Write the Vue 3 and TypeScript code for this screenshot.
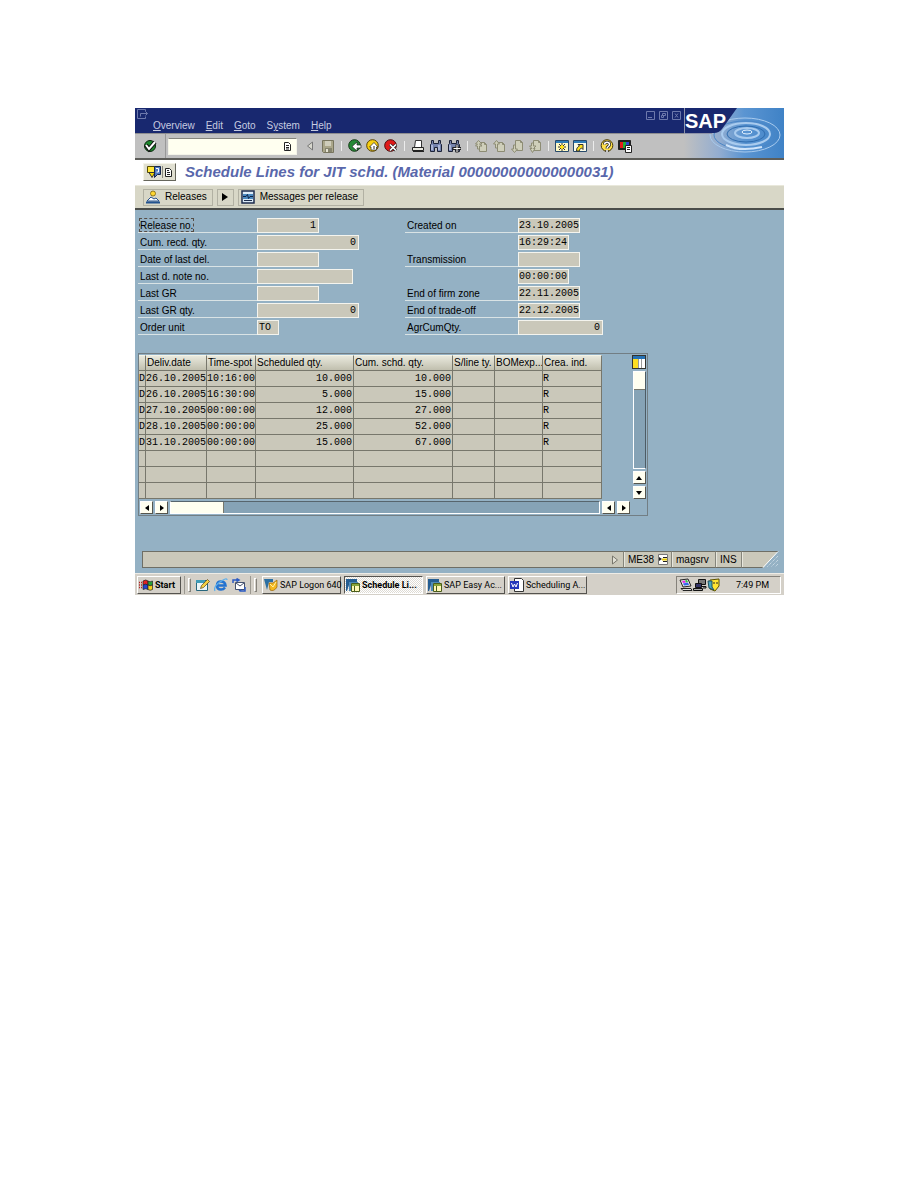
<script setup lang="ts">
import { ref } from 'vue'

interface Field {
  id: string
  label: string
  value: string
  size: string
  right?: boolean
}

const menus: [string, string, string][] = [
  ['', 'O', 'verview'],
  ['', 'E', 'dit'],
  ['', 'G', 'oto'],
  ['S', 'y', 'stem'],
  ['', 'H', 'elp'],
]

const leftFields: Field[] = [
  { id: 'release', label: 'Release no.', value: '1', size: 'w-date', right: true },
  { id: 'recd', label: 'Cum. recd. qty.', value: '0', size: 'w-qty', right: true },
  { id: 'lastdel', label: 'Date of last del.', value: '', size: 'w-date' },
  { id: 'note', label: 'Last d. note no.', value: '', size: 'w-note' },
  { id: 'gr', label: 'Last GR', value: '', size: 'w-date' },
  { id: 'grqty', label: 'Last GR qty.', value: '0', size: 'w-qty', right: true },
  { id: 'unit', label: 'Order unit', value: 'TO', size: 'w-unit' },
]

const rightFields: Field[] = [
  { id: 'created', label: 'Created on', value: '23.10.2005', size: 'w-date' },
  { id: 'createdtime', label: '', value: '16:29:24', size: 'w-time' },
  { id: 'trans', label: 'Transmission', value: '', size: 'w-date' },
  { id: 'transtime', label: '', value: '00:00:00', size: 'w-time' },
  { id: 'firm', label: 'End of firm zone', value: '22.11.2005', size: 'w-date' },
  { id: 'trade', label: 'End of trade-off', value: '22.12.2005', size: 'w-date' },
  { id: 'agr', label: 'AgrCumQty.', value: '0', size: 'w-agr', right: true },
]

const headers = ['', 'Deliv.date', 'Time-spot', 'Scheduled qty.', 'Cum. schd. qty.', 'S/line ty.', 'BOMexp...', 'Crea. ind.']
const rows: string[][] = [
  ['D', '26.10.2005', '10:16:00', '10.000', '10.000', '', '', 'R'],
  ['D', '26.10.2005', '16:30:00', '5.000', '15.000', '', '', 'R'],
  ['D', '27.10.2005', '00:00:00', '12.000', '27.000', '', '', 'R'],
  ['D', '28.10.2005', '00:00:00', '25.000', '52.000', '', '', 'R'],
  ['D', '31.10.2005', '00:00:00', '15.000', '67.000', '', '', 'R'],
  ['', '', '', '', '', '', '', ''],
  ['', '', '', '', '', '', '', ''],
  ['', '', '', '', '', '', '', ''],
]

const command = ref('')
const pageKinds = ['first', 'up', 'down', 'last']
const tasks = [
  { label: 'SAP Logon 640', icon: 'logon', active: false },
  { label: 'Schedule Li...', icon: 'gui', active: true },
  { label: 'SAP Easy Ac...', icon: 'gui', active: false },
  { label: 'Scheduling A...', icon: 'word', active: false },
]
</script>

<template>
  <main class="page">
    <div class="window">
      <header class="top">
        <div class="bars">
          <div class="menubar">
            <div class="captions">
              <svg class="sysicon" viewBox="0 0 13 11" width="13" height="11"><path d="M9.500 2.500V.5h-8v9h8v-2M4.500 7.500v-3h7M9.500 2.500l2 2-2 2" /></svg>
              <div class="winbtns">
                <button type="button" aria-label="Minimize"><svg viewBox="0 0 9 9" width="9" height="9"><path d="M.5.5h8v8h-8zM2 6.500h4" /></svg></button>
                <button type="button" aria-label="Restore"><svg viewBox="0 0 9 9" width="9" height="9"><path d="M.5.5h8v8h-8zM3.500 2.500h3v2h-3zM2.500 4.500h2v2h-2z" /></svg></button>
                <button type="button" aria-label="Close"><svg viewBox="0 0 9 9" width="9" height="9"><path d="M.5.5h8v8h-8zM3 2.500l3 4M6 2.500l-3 4" /></svg></button>
              </div>
            </div>
            <nav class="menus">
              <a v-for="m in menus" :key="m[2]" href="#">{{ m[0] }}<u>{{ m[1] }}</u>{{ m[2] }}</a>
            </nav>
          </div>
          <div class="toolbar">
            <button type="button" class="enter" aria-label="Enter">
              <svg viewBox="0 0 14 14" width="14" height="14"><circle cx="7" cy="7" r="5.500" fill="#1d8a2d" stroke="#0b260d" /><path d="M3 6l3 4 6-7" fill="none" stroke="#111" stroke-width="4" /><path d="M3 6l3 4 6-7" fill="none" stroke="#fff" stroke-width="2" /></svg>
            </button>
            <div class="command">
              <input v-model="command" type="text" aria-label="Command" />
              <button type="button" aria-label="Command list"><svg viewBox="0 0 8 9" width="8" height="9"><path d="M.5.5h4l2 2v6h-6z" fill="#fff" stroke="#222" /><path d="M2 3.500h3M2 5.500h3M2 7h3" stroke="#222" /></svg></button>
            </div>
            <button type="button" class="tb" aria-label="Collapse"><svg viewBox="0 0 14 14" width="14" height="14"><path d="M9.500 3v8l-5-4z" fill="#d8d8ce" stroke="#777" /></svg></button>
            <button type="button" class="tb" aria-label="Save"><svg viewBox="0 0 14 14" width="14" height="14"><path d="M1.500 1.500h11v12h-10l-1-1z" fill="#aaa68a" stroke="#77745e" /><path d="M4 2h6v5H4z" fill="#cfcdbb" /><path d="M4 9h7v4H4z" fill="#85836e" /><path d="M5 10h2v3H5z" fill="#e5e3d3" /></svg></button>
            <i class="sep"></i>
            <button type="button" class="tb" aria-label="Back"><svg viewBox="0 0 14 14" width="14" height="14"><circle cx="6.500" cy="6.500" r="5.800" fill="#268a36" stroke="#123915" /><path d="M13 6H9V3L4 7.500 9 12V9h4z" fill="#fff" stroke="#222" stroke-width=".7" /></svg></button>
            <button type="button" class="tb" aria-label="Exit"><svg viewBox="0 0 14 14" width="14" height="14"><circle cx="6.500" cy="6.500" r="5.800" fill="#f8cf12" stroke="#5a4200" /><path d="M5 11V8H3.500L8 3.500 12 8h-1.500v3z" fill="#fff" stroke="#222" stroke-width=".7" /><path d="M8 7v3" stroke="#222" /></svg></button>
            <button type="button" class="tb" aria-label="Cancel"><svg viewBox="0 0 14 14" width="14" height="14"><circle cx="6.500" cy="6.500" r="5.800" fill="#e01919" stroke="#4d0808" /><path d="M6 5.500l6 6M12 5.500l-6 6" stroke="#222" stroke-width="3" /><path d="M6 5.500l6 6M12 5.500l-6 6" stroke="#fff" stroke-width="1.700" /></svg></button>
            <i class="sep"></i>
            <button type="button" class="tb" aria-label="Print"><svg viewBox="0 0 14 14" width="14" height="14"><path d="M4.500 1.500h6v7h-7z" fill="#fff" stroke="#333" /><path d="M1.500 8.500h11v3h-11z" fill="#e8e8e0" stroke="#222" /><path d="M2 12.500h11" stroke="#222" /></svg></button>
            <button type="button" class="tb" aria-label="Find"><svg viewBox="0 0 14 14" width="14" height="14"><path d="M2.500 1.500h2v3h5v-3h2v3l1 1v7h-4v-4h-3v4h-4v-7l1-1z" fill="#7583ad" stroke="#1c2238" /><path d="M3 6v5M10 6v5" stroke="#e0e6ff" /></svg></button>
            <button type="button" class="tb" aria-label="Find next"><svg viewBox="0 0 14 14" width="14" height="14"><path d="M2.500 1.500h2v3h5v-3h2v3l1 1v7h-4v-4h-3v4h-4v-7l1-1z" fill="#7583ad" stroke="#1c2238" /><path d="M3 6v5" stroke="#e0e6ff" /><path d="M10 5.500v8M6 9.500h8" stroke="#222" stroke-width="3" /><path d="M10 6v7M6.500 9.500h7" stroke="#fff" /></svg></button>
            <i class="sep"></i>
            <button v-for="k in pageKinds" :key="k" type="button" class="tb" :aria-label="`Page ${k}`">
              <svg viewBox="0 0 14 14" width="14" height="14" fill="#cfcfba" stroke="#8d8c74">
                <path v-if="k === 'first' || k === 'up'" d="M5.500 3.500h5l2 2v7h-7zM10.500 3.500v2h2" />
                <path v-else d="M5.500 1.500h5l2 2v8h-7zM10.500 1.500v2h2" />
                <path v-if="k === 'first'" d="M3.500 10V7h-2l2-2h-2L4.500 1.500 8 5H5.500L8 7H5.500v3z" />
                <path v-if="k === 'up'" d="M3.500 9V5h-2l3-3.500 3 3.500h-2v4z" />
                <path v-if="k === 'down'" d="M3.500 6v4h-2l3 3.500 3-3.500h-2V6z" />
                <path v-if="k === 'last'" d="M3.500 4v3h-2L4 9.500H2l2.500 4L7 9.500H5.500L8 7H5.500V4z" />
              </svg>
            </button>
            <i class="sep"></i>
            <button type="button" class="tb" aria-label="New session"><svg viewBox="0 0 14 14" width="14" height="14"><path d="M.5 1.500h13v11H.5z" fill="#fff9c4" stroke="#27496b" /><path d="M1 2h12v2H1z" fill="#2f7cb8" /><path d="M7 4v8M3 8h8M4 5l6 6M10 5l-6 6" stroke="#333" /><path d="M5 8h4M7 6v4" stroke="#ffe21a" stroke-width="2" /></svg></button>
            <button type="button" class="tb" aria-label="Create shortcut"><svg viewBox="0 0 14 14" width="14" height="14"><path d="M.5 1.500h13v11H.5z" fill="#fbfbe6" stroke="#27496b" /><path d="M1 2h12v2H1z" fill="#2f7cb8" /><path d="M3.500 12c0-3 1-4 3-5L5 5.500h5v5L8.500 9c-2 1-2 2-2 3z" fill="#ffe21a" stroke="#333" /></svg></button>
            <i class="sep"></i>
            <button type="button" class="tb" aria-label="Help"><svg viewBox="0 0 14 14" width="14" height="14"><circle cx="7" cy="6.500" r="5.800" fill="#ffe04a" stroke="#4a3a00" /><path d="M4.500 5.500c0-3 5-3 5 0 0 2-2.500 2-2.500 4M7 11v2" fill="none" stroke="#222" stroke-width="3" /><path d="M4.500 5.500c0-3 5-3 5 0 0 2-2.500 2-2.500 4M7 11v2" fill="none" stroke="#fff" stroke-width="1.500" /></svg></button>
            <button type="button" class="tb" aria-label="Customize layout"><svg viewBox="0 0 14 14" width="14" height="14"><path d="M.5 1.500h12v9H.5z" fill="#222" stroke="#222" /><path d="M2 3h3v6H2z" fill="#e31c1c" /><path d="M5 3h3v6H5z" fill="#1fb135" /><path d="M8 3h3v6H8z" fill="#2c46d8" /><path d="M7.500 6.500h6v7h-6z" fill="#fff" stroke="#222" /><path d="M9 8.500h3M9 10.500h3" stroke="#222" /></svg></button>
          </div>
        </div>
        <div class="brand">
          <svg class="water" viewBox="0 0 100 50" width="100" height="50">
            <defs>
              <linearGradient id="sea" x1="0" x2="1" y1="0" y2="0"><stop offset="0" stop-color="#c0c0c0" /><stop offset=".35" stop-color="#93add0" /><stop offset=".6" stop-color="#5b95d2" /><stop offset="1" stop-color="#3f82c6" /></linearGradient>
            </defs>
            <path d="M0 0h100v50H0z" fill="url(#sea)" />
            <g fill="none" stroke="#a9cbee">
              <ellipse cx="63" cy="24" rx="5" ry="2" stroke="#e6f3ff" />
              <ellipse cx="63" cy="25" rx="12" ry="5" stroke-width="2" />
              <ellipse cx="62" cy="26" rx="19" ry="8" stroke="#2f6cae" />
              <ellipse cx="62" cy="26" rx="24" ry="11" stroke-width="2" />
              <ellipse cx="61" cy="27" rx="31" ry="14" stroke="#4b86c6" />
              <ellipse cx="61" cy="27" rx="35" ry="17" />
              <path d="M42 37q14 7 36 2" stroke="#cfe4fa" stroke-width="2" />
            </g>
            <path d="M0 0h53L38 21q-3 4-8 4H0z" fill="#18286f" />
            <path d="M.5 0v25.500H28" fill="none" stroke="#8d93a8" />
          </svg>
          <span class="sap">SAP</span>
        </div>
      </header>

      <section class="titlebar">
        <button type="button" class="objbtn" aria-label="Services for object">
          <svg viewBox="0 0 26 14" width="26" height="14"><path d="M.5 1.500h7v6h-7z" fill="#ffe63b" stroke="#554b00" /><path d="M2 7.500h6l-3 5z" fill="#f5d800" stroke="#333" /><path d="M7.500 1.500h6v8h-3l-3 3z" fill="#4e78c0" stroke="#16264d" /><path d="M9 3.500h2.500V7H9.500" fill="none" stroke="#fff" /><path d="M15.500 1v12" stroke="#8a8a7e" /><path d="M18.500 3.500h4l2 2v6h-6z" fill="#fff" stroke="#222" /><path d="M20 5.500h2M20 7.500h3M20 9.500h3" stroke="#222" /></svg>
        </button>
        <h1>Schedule Lines for JIT schd. (Material 000000000000000031)</h1>
      </section>

      <section class="appbar">
        <button type="button" class="app">
          <svg viewBox="0 0 14 14" width="14" height="14"><circle cx="7" cy="3.500" r="2.500" fill="#ffd733" stroke="#6c5300" stroke-width=".7" /><path d="M1 11l4-4 3 2 2-1 3 3z" fill="#fff" stroke="#27528f" /><path d="M0 12.500h14" stroke="#22528f" stroke-width="2" /></svg>
          <span>Releases</span>
        </button>
        <button type="button" class="app arrow" aria-label="Next"><svg viewBox="0 0 6 8" width="6" height="8"><path d="M0 0v8l6-4z" fill="#000" /></svg></button>
        <button type="button" class="app">
          <svg viewBox="0 0 14 14" width="14" height="14"><path d="M1 1h12v12H1z" fill="#dcebf7" stroke="#1d2d4d" stroke-width="1.500" /><path d="M2 4h10v5H2z" fill="#4a88bf" /><path d="M2 6.500h3l1.500-2 1 4 1.500-2h3" fill="none" stroke="#0d2447" /><path d="M3 10.500h8" stroke="#1d2d4d" /></svg>
          <span>Messages per release</span>
        </button>
      </section>

      <section class="content">
        <form class="fields" @submit.prevent>
          <div class="col">
            <div v-for="(f, i) in leftFields" :key="f.id" class="field">
              <label :for="f.id"><span :class="{ focus: i === 0 }">{{ f.label }}</span></label>
              <input :id="f.id" type="text" readonly :value="f.value" :class="[f.size, { right: f.right }]" />
            </div>
          </div>
          <div class="col second">
            <div v-for="f in rightFields" :key="f.id" class="field">
              <label v-if="f.label" :for="f.id"><span>{{ f.label }}</span></label>
              <i v-else class="nolabel"></i>
              <input :id="f.id" type="text" readonly :value="f.value" :class="[f.size, { right: f.right }]" :aria-label="f.label || 'Time'" />
            </div>
          </div>
        </form>

        <div class="grid">
          <div class="gridmain">
            <table>
              <colgroup>
                <col class="c0" /><col class="c1" /><col class="c2" /><col class="c3" /><col class="c4" /><col class="c5" /><col class="c6" /><col class="c7" />
              </colgroup>
              <thead>
                <tr><th v-for="(h, i) in headers" :key="i" scope="col">{{ h }}</th></tr>
              </thead>
              <tbody>
                <tr v-for="(r, ri) in rows" :key="ri">
                  <td v-for="(c, ci) in r" :key="ci" :class="{ num: ci === 3 || ci === 4 }">{{ c }}</td>
                </tr>
              </tbody>
            </table>
            <div class="vscroll">
              <button type="button" class="config" aria-label="Configuration"><svg viewBox="0 0 12 12" width="12" height="12"><path d="M0 0h12v12H0z" fill="#fff" /><path d="M0 0h12v3H0z" fill="#2672b4" /><path d="M0 3h5v9H0z" fill="#ffdf22" /><path d="M8.500 3v9M5.500 3v9" stroke="#999" /></svg></button>
              <div class="vtrack"><div class="vthumb"></div></div>
              <button type="button" class="sb" aria-label="Scroll up"><svg viewBox="0 0 6 4" width="6" height="4"><path d="M0 4h6L3 0z" /></svg></button>
              <button type="button" class="sb" aria-label="Scroll down"><svg viewBox="0 0 6 4" width="6" height="4"><path d="M0 0h6L3 4z" /></svg></button>
            </div>
          </div>
          <div class="hscroll">
            <button type="button" class="sb" aria-label="First column"><svg viewBox="0 0 4 6" width="4" height="6"><path d="M4 0v6L0 3z" /></svg></button>
            <button type="button" class="sb" aria-label="Next column"><svg viewBox="0 0 4 6" width="4" height="6"><path d="M0 0v6l4-3z" /></svg></button>
            <div class="htrack"><div class="hthumb"></div></div>
            <button type="button" class="sb" aria-label="Scroll left"><svg viewBox="0 0 4 6" width="4" height="6"><path d="M4 0v6L0 3z" /></svg></button>
            <button type="button" class="sb" aria-label="Scroll right"><svg viewBox="0 0 4 6" width="4" height="6"><path d="M0 0v6l4-3z" /></svg></button>
          </div>
        </div>

        <footer class="status">
          <div class="message"><svg viewBox="0 0 8 10" width="8" height="10"><path d="M1.500 1v8l5-4z" fill="#e2e1d6" stroke="#77766c" /></svg></div>
          <div class="cell tcode"><span>ME38</span><svg viewBox="0 0 10 11" width="10" height="11"><path d="M.5.5h9v10h-9z" fill="#fff" stroke="#777" /><path d="M1 3l3 2-3 2z" fill="#222" /><path d="M5 3.500h4M5 7.500h4" stroke="#222" /><path d="M4 5.500h5" stroke="#e8c800" stroke-width="2" /></svg></div>
          <div class="cell host">magsrv</div>
          <div class="cell mode">INS</div>
          <div class="cell last"></div>
          <svg class="corner" viewBox="0 0 20 17" width="20" height="17"><path d="M0 0h17L2 17H0z" fill="#cac8ba" /><path d="M0 .5h17M0 16.500h2" stroke="#6e6e65" /><path d="M17 .5L2 16.500" stroke="#fff" /><path d="M17 5L6 16M17 9l-7 7M17 13l-3 3" stroke="#dbe7ee" stroke-dasharray="1 1" /></svg>
        </footer>
      </section>

      <footer class="taskbar">
        <button type="button" class="task start">
          <svg viewBox="0 0 14 12" width="14" height="12"><path d="M4 2q3-2 5 0v4q-2-1.500-5 0z" fill="#e32121" stroke="#222" stroke-width=".7" /><path d="M9 2q2 1.500 4.500 0v4Q11 7.500 9 6z" fill="#24a138" stroke="#222" stroke-width=".7" /><path d="M4 6q3-1.500 5 0v4.500Q7 9 4 10.500z" fill="#2442cf" stroke="#222" stroke-width=".7" /><path d="M9 6q2 1.500 4.500 0v4.500Q11 12 9 10.500z" fill="#f5cf1a" stroke="#222" stroke-width=".7" /><path d="M0 3.500h3M0 6h3M0 8.500h3" stroke="#b12222" stroke-dasharray="1 1" stroke-width="1.500" /></svg>
          <span>Start</span>
        </button>
        <i class="edge"></i><i class="grip"></i>
        <div class="quick">
          <button type="button" aria-label="Show desktop"><svg viewBox="0 0 14 14" width="14" height="14"><path d="M.5 2.500h11v10H.5z" fill="#e9f4f7" stroke="#26667d" /><path d="M0 2h9v3H0z" fill="#3e9bb7" /><path d="M4.500 10.500l1-3 6-6 2 2-6 6z" fill="#f3cf42" stroke="#5b4312" stroke-width=".7" /></svg></button>
          <button type="button" aria-label="Internet browser"><svg viewBox="0 0 14 14" width="14" height="14"><path d="M11 9.500q-1.500 2-4 2-4 0-4-4t4-4 4.500 4H4" fill="none" stroke="#2573d0" stroke-width="2.500" /><path d="M1 13q-2-4 5-9t7-2" fill="none" stroke="#5eafec" stroke-width="1.200" /></svg></button>
          <button type="button" aria-label="Mail"><svg viewBox="0 0 14 14" width="14" height="14"><path d="M3.500 4.500h9v7h-9z" fill="#fff" stroke="#44516d" /><path d="M4 5l4 3 4-3" fill="none" stroke="#44516d" /><path d="M1 5V2h5M4.500.5L7 2 4.500 3.500M13 9v4H8M9 11.500L7 13" fill="none" stroke="#2b5ac2" stroke-width="1.500" /></svg></button>
        </div>
        <i class="edge"></i><i class="grip"></i>
        <div class="tasks">
          <button v-for="t in tasks" :key="t.label" type="button" class="task" :class="{ active: t.active }">
            <svg v-if="t.icon === 'logon'" viewBox="0 0 14 14" width="14" height="14"><path d="M0 1h9v3H5L3 12z" fill="#2b6fa3" /><path d="M5 5h4l4-3v7q-3 5-7 3z" fill="#f5b921" stroke="#9a6507" stroke-width=".7" /><path d="M6 6l3 3 3-5" fill="none" stroke="#fff0a3" /></svg>
            <svg v-else-if="t.icon === 'gui'" viewBox="0 0 14 14" width="14" height="14"><path d="M0 1h11v3H4l-3 9H0z" fill="#255e92" /><path d="M3 4h9v3H6l-1 6H3z" fill="#4e8ab9" /><path d="M5.500 5.500h8v8h-8z" fill="#fff7b5" stroke="#4b5d1a" /><path d="M6 6h7v2H6z" fill="#87a43a" /><path d="M8.500 8v5" stroke="#4b5d1a" /></svg>
            <svg v-else viewBox="0 0 14 14" width="14" height="14"><path d="M4.500.5h7l2 2v11h-9z" fill="#fff" stroke="#333" /><path d="M0 3h9v8H0z" fill="#2337bb" /><path d="M1.500 5l1.500 4 1.500-3L6 9l1.500-4" fill="none" stroke="#fff" /></svg>
            <span>{{ t.label }}</span>
          </button>
        </div>
        <div class="tray">
          <svg viewBox="0 0 14 14" width="14" height="14"><path d="M1 2l8-1 3 7-8 1z" fill="#e8e8e8" stroke="#222" /><path d="M3 3l3-.5 1 2-3 .5z" fill="#e52be5" /><path d="M6 2.500l2-.5 1 2-2 .5z" fill="#2bc83e" /><path d="M4 5.500l5-1 1 2.500-5 .5z" fill="#3268ed" /><path d="M2 10.500h10l1 2H4z" fill="#ddd" stroke="#222" /></svg>
          <svg viewBox="0 0 14 14" width="14" height="14"><path d="M5.500 1.500h7v5h-7z" fill="#777" stroke="#111" /><path d="M2.500 5.500h6v4h-6z" fill="#336" stroke="#111" /><path d="M.5 10.500h9v2h-9zM9 8.500h4v1.500h-3" fill="#aaa" stroke="#111" /></svg>
          <svg viewBox="0 0 14 14" width="14" height="14"><path d="M3 2l9-1v7l-4 5-5-2z" fill="#ffe532" stroke="#5b5200" /><path d="M1 3h4v6l2 3-5-2z" fill="#49a7be" stroke="#205161" /><path d="M7 4v2M10 4v2" stroke="#222" /></svg>
          <time>7:49 PM</time>
        </div>
      </footer>
    </div>
  </main>
</template>

<style>
body {
  margin: 0;
  background: #fff;
}
</style>

<style scoped>
* {
  box-sizing: border-box;
}

.page {
  padding: 108px 134px 0 135px;
  font-family: "Liberation Sans", Arial, sans-serif;
  font-size: 10px;
  line-height: 12px;
  color: #000;
}

button,
input {
  margin: 0;
  padding: 0;
  border: 0;
  border-radius: 0;
  background: none;
  font: inherit;
  color: inherit;
}

button {
  display: flex;
  align-items: center;
  justify-content: center;
}

svg {
  display: block;
  flex: none;
}

.top {
  display: flex;
}

.bars {
  flex: 1;
  min-width: 0;
}

.menubar {
  height: 26px;
  background: #18286f;
  border-bottom: 1px solid #8e8e90;
}

.captions {
  display: flex;
  justify-content: space-between;
  height: 12px;
  padding: 1px 3px 0 1px;
}

.captions svg {
  fill: none;
  stroke: #6d79ac;
}

.winbtns {
  display: flex;
  gap: 4px;
  padding-top: 1px;
}

.menus {
  display: flex;
  gap: 11px;
  padding-left: 18px;
}

.menus a {
  color: #c6cbe0;
  text-decoration: none;
}

.toolbar {
  display: flex;
  align-items: center;
  height: 24px;
  background: #c0c0c0;
}

.enter {
  width: 31px;
  height: 24px;
  border-right: 1px solid #989898;
}

.command {
  display: flex;
  align-items: center;
  width: 129px;
  height: 17px;
  margin: 0 4px 0 2px;
  padding-right: 4px;
  background: #fffff0;
  border: 1px solid #f4f4e8;
  border-top-color: #85857e;
}

.command input {
  flex: 1;
  min-width: 0;
  height: 15px;
  outline: 0;
}

.tb {
  width: 18px;
  height: 22px;
}

.sep {
  width: 1px;
  height: 10px;
  margin: 0 4px;
  background: #ececec;
}

.brand {
  position: relative;
  width: 100px;
  height: 50px;
}

.sap {
  position: absolute;
  left: 1px;
  top: 1px;
  font-size: 20px;
  line-height: 24px;
  font-weight: bold;
  color: #fff;
}

.titlebar {
  display: flex;
  align-items: center;
  gap: 9px;
  height: 27px;
  padding: 0 0 2px 8px;
  border-top: 2px solid #5d5d59;
}

.objbtn {
  width: 33px;
  height: 18px;
  background: #e0dfd1;
  border: 1px solid #f5f4e9;
  border-right-color: #66665c;
  border-bottom-color: #66665c;
}

h1 {
  margin: 0;
  font-size: 15px;
  line-height: 18px;
  font-style: italic;
  font-weight: bold;
  color: #5967ab;
  white-space: nowrap;
}

.appbar {
  display: flex;
  align-items: center;
  gap: 4px;
  height: 25px;
  padding-left: 8px;
  background: #d8d7c7;
  border-top: 1px solid #e9e8db;
  border-bottom: 2px solid #4b4d4a;
}

.app {
  gap: 5px;
  height: 17px;
  padding: 0 5px 0 2px;
  border: 1px solid #b2b1a3;
}

.arrow {
  width: 17px;
  padding: 0;
}

.content {
  display: flow-root;
  padding: 8px 3px 5px;
  background: #94b1c4;
}

.fields {
  display: flex;
}

.col {
  flex: none;
  width: 267px;
}

.second {
  width: 198px;
}

.field {
  display: flex;
  height: 17px;
  padding-bottom: 2px;
}

.field label,
.nolabel {
  width: 119px;
  height: 15px;
}

.second .field label,
.nolabel {
  width: 113px;
}

.field label {
  padding: 1px 0 0 2px;
  line-height: 14px;
  border-bottom: 1px solid #d9e3e5;
}

.field label span {
  display: block;
  width: max-content;
  height: 12px;
}

.field label .focus {
  outline: 1px dashed #564d46;
}

.field input {
  height: 15px;
  padding: 0 1px;
  background: #cac8ba;
  border: 1px solid #f4f4ee;
  font-family: "Liberation Mono", monospace;
  line-height: 12px;
  outline: 0;
}

.field .w-date { width: 62px; }
.field .w-time { width: 51px; }
.field .w-qty { width: 102px; }
.field .w-note { width: 96px; }
.field .w-unit { width: 22px; }
.field .w-agr { width: 85px; }

.field .w-date,
.field .w-time {
  padding: 0;
}

.field .right {
  padding-right: 2px;
  text-align: right;
}

.grid {
  width: 510px;
  margin-top: 16px;
  border: 1px solid #727e84;
}

.gridmain {
  display: flex;
  justify-content: space-between;
  padding: 1px 1px 0 0;
}

table {
  width: 463px;
  table-layout: fixed;
  border-collapse: separate;
  border-spacing: 0;
}

.c0 { width: 7px; }
.c1 { width: 61px; }
.c2 { width: 49px; }
.c3 { width: 98px; }
.c4 { width: 99px; }
.c5 { width: 42px; }
.c6 { width: 48px; }
.c7 { width: 59px; }

th,
td {
  height: 16px;
  padding: 0;
  line-height: 15px;
  border-right: 1px solid #77776c;
  border-bottom: 1px solid #77776c;
  text-align: left;
  white-space: nowrap;
  overflow: hidden;
}

th {
  padding-left: 1px;
  font-weight: normal;
  background: linear-gradient(#e9e9dd, #c0bfae);
  border-top: 1px solid #f4f4e8;
  line-height: 14px;
}

td {
  background: #cac8ba;
  font-family: "Liberation Mono", monospace;
}

.num {
  padding-right: 1px;
  text-align: right;
}

.vscroll {
  display: flex;
  flex-direction: column;
  align-items: center;
  gap: 2px;
  width: 14px;
}

.config {
  width: 14px;
  height: 14px;
  border: 1px solid #33332f;
}

.vtrack {
  flex: 1;
  width: 13px;
  border: 1px solid #fff;
  border-right-color: #4d5c65;
  background: #86a3b6;
}

.vthumb {
  height: 18px;
  background: #fffff0;
  border-bottom: 1px solid #77776c;
}

.sb {
  width: 13px;
  height: 13px;
  background: #fffff0;
  border: 1px solid #fff;
  border-right-color: #55554d;
  border-bottom-color: #55554d;
}

.hscroll {
  display: flex;
  gap: 2px;
  padding: 2px 17px 1px 1px;
}

.htrack {
  flex: 1;
  height: 13px;
  border: 1px solid #fff;
  border-top-color: #57656d;
  background: #86a3b6;
}

.hthumb {
  width: 53px;
  height: 11px;
  background: #fffff0;
  border-right: 1px solid #77776c;
}

.status {
  display: flex;
  height: 17px;
  margin-top: 35px;
  padding-left: 4px;
}

.message,
.cell {
  display: flex;
  align-items: center;
  background: #cac8ba;
  border-top: 1px solid #6e6e65;
  border-bottom: 1px solid #6e6e65;
}

.message {
  flex: 1;
  justify-content: flex-end;
  padding-right: 4px;
  border-left: 1px solid #6e6e65;
}

.cell {
  padding-left: 4px;
  border-left: 1px solid #85857b;
  box-shadow: inset 1px 0 #e8e7dd;
}

.tcode {
  width: 48px;
  gap: 4px;
}

.host { width: 44px; }
.mode { width: 26px; }
.last { width: 20px; }

.taskbar {
  display: flex;
  align-items: center;
  height: 22px;
  padding: 1px 3px 0 2px;
  background: #d4d0c8;
  border-top: 1px solid #eeece6;
  font-family: Roboto, "Liberation Sans", sans-serif;
  font-size: 9px;
}

.task {
  justify-content: flex-start;
  gap: 2px;
  width: 79px;
  height: 18px;
  padding-left: 1px;
  border: 1px solid #fff;
  border-right-color: #55534f;
  border-bottom-color: #55534f;
  white-space: nowrap;
}

.start {
  width: 44px;
  font-weight: bold;
}

.active {
  border-color: #55534f #fff #fff #55534f;
  background: repeating-conic-gradient(#fff 0 25%, #dedbd4 0 50%) 0 0 / 2px 2px;
  font-weight: bold;
}

.edge {
  width: 1px;
  height: 18px;
  margin-left: 3px;
  background: #9b9890;
}

.grip {
  width: 3px;
  height: 14px;
  margin: 0 5px 0 3px;
  border: 1px solid #fff;
  border-right-color: #85827b;
  border-bottom-color: #85827b;
}

.quick {
  display: flex;
  gap: 4px;
  padding-right: 1px;
}

.tasks {
  display: flex;
  gap: 3px;
}

.tray {
  display: flex;
  align-items: center;
  width: 105px;
  height: 18px;
  margin-left: auto;
  padding: 0 11px 0 2px;
  border: 1px solid #85827b;
  border-right-color: #fff;
  border-bottom-color: #fff;
}

.tray time {
  margin-left: auto;
}
</style>
